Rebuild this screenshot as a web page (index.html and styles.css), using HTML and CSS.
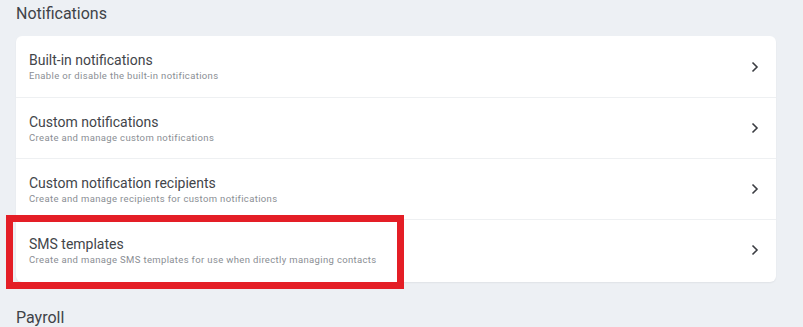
FILE: index.html
```html
<!DOCTYPE html>
<html lang="en">
<head>
    <meta charset="UTF-8">
    <title>Settings</title>
    <link rel="stylesheet" href="styles.css">
</head>
<body>

    <!-- Notifications section -->
    <h2 class="section-title">Notifications</h2>
    <div class="settings-card">
        <a class="settings-row" href="#">
            <div class="row-text">
                <div class="row-title">Built-in notifications</div>
                <div class="row-desc">Enable or disable the built-in notifications</div>
            </div>
            <svg class="chevron" viewBox="0 0 8 12"><path d="M1.5 1.5 6 6l-4.5 4.5"/></svg>
        </a>
        <a class="settings-row" href="#">
            <div class="row-text">
                <div class="row-title">Custom notifications</div>
                <div class="row-desc">Create and manage custom notifications</div>
            </div>
            <svg class="chevron" viewBox="0 0 8 12"><path d="M1.5 1.5 6 6l-4.5 4.5"/></svg>
        </a>
        <a class="settings-row" href="#">
            <div class="row-text">
                <div class="row-title">Custom notification recipients</div>
                <div class="row-desc">Create and manage recipients for custom notifications</div>
            </div>
            <svg class="chevron" viewBox="0 0 8 12"><path d="M1.5 1.5 6 6l-4.5 4.5"/></svg>
        </a>
        <a class="settings-row highlighted" href="#">
            <div class="row-text">
                <div class="row-title">SMS templates</div>
                <div class="row-desc">Create and manage SMS templates for use when directly managing contacts</div>
            </div>
            <svg class="chevron" viewBox="0 0 8 12"><path d="M1.5 1.5 6 6l-4.5 4.5"/></svg>
            <span class="highlight-box"></span>
        </a>
    </div>

    <h2 class="section-title">Payroll</h2>

</body>
</html>
```

FILE: styles.css
```css
body {
    font-family: Roboto, "Liberation Sans", sans-serif;
    background-color: #EDF0F4;
    color: #3A3D42;
    margin: 0;
    padding: 0 27px 0 16px;
}

.section-title {
    font-size: 16px;
    font-weight: 400;
    margin: 0;
    padding: 4px 0 12px;
    line-height: 20px;
    color: #3F4348;
}

/* Card with settings links */
.settings-card {
    background-color: #FFFFFF;
    border-radius: 6px;
    box-shadow: 0 1px 2px rgba(0, 0, 0, 0.06);
    margin-bottom: 22px;
}

.settings-row {
    display: flex;
    align-items: center;
    height: 61px;
    padding: 0 17px 0 13px;
    border-top: 1px solid #EEF0F2;
    text-decoration: none;
    color: inherit;
    position: relative;
    box-sizing: border-box;
}

.settings-row:first-child {
    border-top: none;
}

.settings-row:last-child {
    height: 63px;
    padding-bottom: 2px;
}

.row-text {
    flex: 1;
}

.row-title {
    font-size: 14px;
    line-height: 18px;
    color: #42454A;
}

.row-desc {
    font-size: 9.5px;
    line-height: 13px;
    color: #8A8E94;
    letter-spacing: 0.35px;
}

.chevron {
    width: 8px;
    height: 12px;
    fill: none;
    stroke: #3A3D42;
    stroke-width: 1.6;
}

/* Red highlight around the SMS templates row */
.highlight-box {
    position: absolute;
    left: -10px;
    top: -5px;
    width: 384px;
    height: 60px;
    border: 7px solid #E41E26;
}
```
